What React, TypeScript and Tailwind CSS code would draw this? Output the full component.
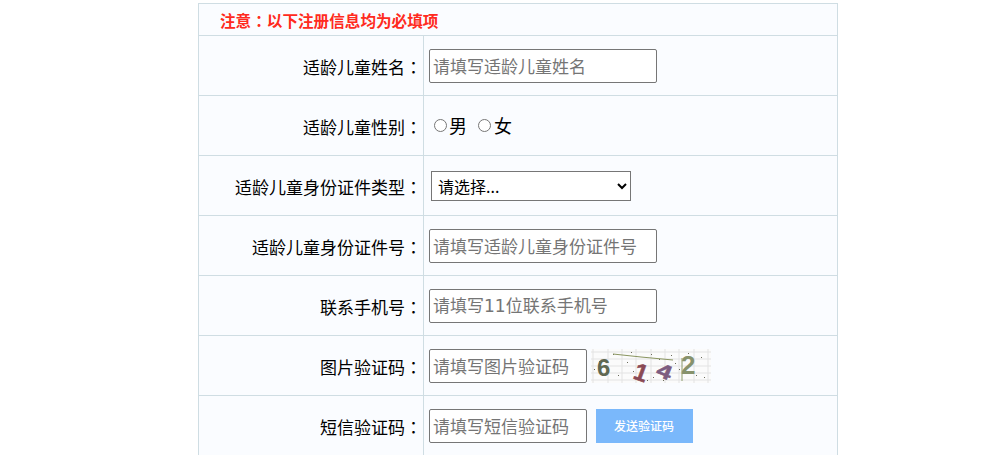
import React from "react";

const inputCls =
  "h-[34px] border border-[#767676] rounded-[2px] bg-white pl-[3px] pr-[3px] text-[17px] text-black outline-none placeholder:text-[#757575]";

// the colon sits centered in its box, which the TC cut of the font gives
const Colon = () => <span className="font-['Noto_Sans_CJK_TC']">：</span>;

const Row = ({ label, children }: { label: string; children: React.ReactNode }) => (
  <div className="flex h-[60px] border-t border-[#cfdde3]">
    <div className="w-[225px] shrink-0 flex items-center justify-end text-[17px] text-black border-r border-[#cfdde3] pt-[2px] pr-[1px]">
      <span>
        {label}
        <Colon />
      </span>
    </div>
    <div className="flex-1 flex items-center pl-[5px]">{children}</div>
  </div>
);

const Captcha = () => (
  <svg width="120" height="34" viewBox="0 0 120 34" className="ml-[4px] bg-[#fbfbfb] overflow-visible">
    {/* grid */}
    {[3, 10, 17, 24, 31].map((y) => (
      <line key={y} x1="0" x2="120" y1={y} y2={y} stroke="#e3e3e3" />
    ))}
    {[2, 17, 31, 45, 60, 74, 88, 103, 117].map((x) => (
      <line key={x} x1={x} x2={x} y1="0" y2="34" stroke="#e3e3e3" />
    ))}
    {/* noise */}
    {[
      [8, 12], [3, 20], [27, 26], [36, 13], [42, 22], [50, 30], [56, 31], [62, 28], [68, 10],
      [80, 6], [84, 14], [88, 20], [92, 10], [97, 4], [105, 26], [113, 28], [110, 8], [72, 31],
      [22, 5], [40, 3], [60, 5], [76, 18],
    ].map(([x, y]) => (
      <rect key={`${x}-${y}`} x={x} y={y} width="1" height="1" fill="#6b6b5a" />
    ))}
    <path d="M22 5 L50 8 L82 11" stroke="#8a9560" fill="none" />
    <path d="M91 9 L91 32" stroke="#8a9a6a" fill="none" />
    <text x="6" y="27" fontSize="24" fontWeight="700" fill="#5f6852" fontFamily="'Liberation Sans', sans-serif">6</text>
    <text x="0" y="0" fontSize="24" fontWeight="700" fill="#8a4a55" stroke="#8a4a55" strokeWidth="0.5" fontFamily="'Liberation Sans', sans-serif" transform="translate(41 29) rotate(20)">1</text>
    <text x="0" y="0" fontSize="20" fontWeight="700" fill="#7c5c80" stroke="#7c5c80" strokeWidth="0.5" fontFamily="'Liberation Sans', sans-serif" transform="translate(64 26) rotate(22) scale(1.35 1)">4</text>
    <text x="90" y="25" fontSize="26" fontWeight="700" fill="#87926c" fontFamily="'Liberation Sans', sans-serif">2</text>
  </svg>
);

export default function App() {
  return (
    <div
      className="h-[455px] overflow-hidden bg-white pt-[3px]"
      style={{ fontFamily: "'Noto Sans CJK SC', 'Noto Sans', sans-serif" }}
    >
      <div className="ml-[198px] w-[640px] border-x border-t border-[#cfdde3] bg-[#fafcff]">
        <div className="h-[31px] flex items-center pl-[21px] pt-[2px] text-[15.6px] font-semibold text-[#ff2a20]">
          <span>
            注意
            <Colon />
            以下注册信息均为必填项
          </span>
        </div>
        <Row label="适龄儿童姓名">
          <input className={`${inputCls} w-[228px]`} placeholder="请填写适龄儿童姓名" />
        </Row>
        <Row label="适龄儿童性别">
          <label className="flex items-center text-[18px] text-black ml-[5px]">
            <input type="radio" name="sex" className="m-0 mr-[2px] w-[13px] h-[13px]" />
            男
          </label>
          <label className="flex items-center text-[18px] text-black ml-[11px]">
            <input type="radio" name="sex" className="m-0 mr-[3px] w-[13px] h-[13px]" />
            女
          </label>
        </Row>
        <Row label="适龄儿童身份证件类型">
          <select className="ml-[2px] w-[200px] h-[30px] border border-[#767676] bg-white pl-[2px] text-[16px] text-black">
            <option>请选择...</option>
          </select>
        </Row>
        <Row label="适龄儿童身份证件号">
          <input className={`${inputCls} w-[228px]`} placeholder="请填写适龄儿童身份证件号" />
        </Row>
        <Row label="联系手机号">
          <input
            className={`${inputCls} w-[228px] font-['DejaVu_Sans','Noto_Sans_CJK_SC',sans-serif]`}
            placeholder="请填写11位联系手机号"
          />
        </Row>
        <Row label="图片验证码">
          <input className={`${inputCls} w-[158px]`} placeholder="请填写图片验证码" />
          <Captcha />
        </Row>
        <Row label="短信验证码">
          <input className={`${inputCls} w-[158px]`} placeholder="请填写短信验证码" />
          <button className="ml-[9px] w-[97px] h-[34px] bg-[#7ab8fb] text-white text-[12px] font-medium pr-[1px] pt-[1px]">
            发送验证码
          </button>
        </Row>
      </div>
    </div>
  );
}
